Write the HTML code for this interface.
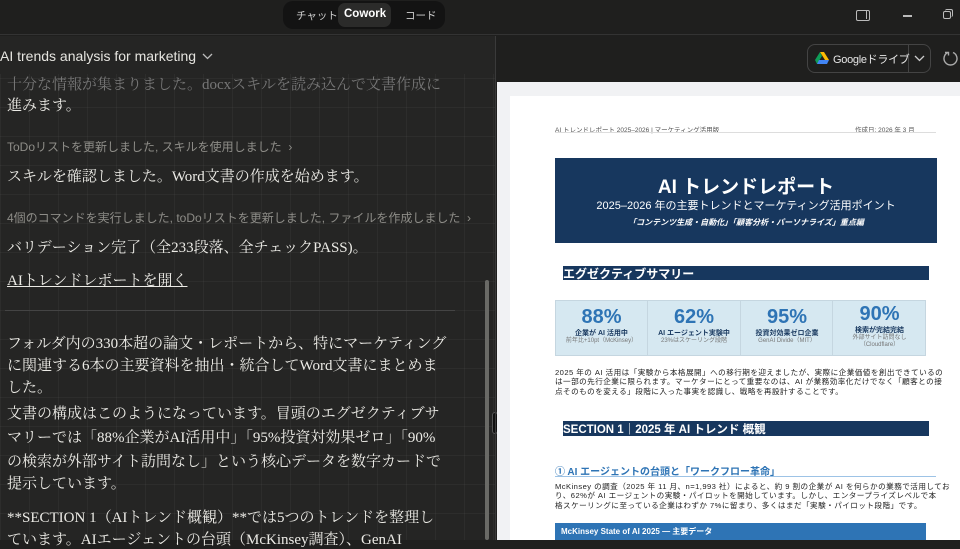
<!DOCTYPE html>
<html><head><meta charset="utf-8"><style>
*{margin:0;padding:0;box-sizing:border-box}
body{width:960px;height:540px;overflow:hidden;background:#1f1f1e;font-family:"Liberation Sans","Noto Sans CJK JP",sans-serif;position:relative}
.a{position:absolute;white-space:nowrap}
.left{position:absolute;left:0;top:36px;width:495px;height:504px;background-color:#252524;
background-image:linear-gradient(rgba(255,255,255,.035) 1px,transparent 1px),linear-gradient(90deg,rgba(255,255,255,.035) 1px,transparent 1px);background-size:29px 29px;background-position:0 13px}
.s{font-family:"Liberation Serif","Noto Serif CJK JP",serif;font-size:15px;color:#ecebe6}
.g{font-size:12px;color:#8e8d88}
.d{font-family:"Liberation Sans","Noto Sans CJK JP",sans-serif}
.p{font-size:7.6px;line-height:9.3px;color:#222;letter-spacing:0.45px}
</style></head><body>
<div class="a" style="left:0;top:0;width:960px;height:35px;background:#1f1f1e;border-bottom:1px solid #333"></div>
<div class="a" style="left:283px;top:1px;width:162px;height:28px;background:#131313;border-radius:10px"></div>
<div class="a" style="left:338px;top:3px;width:53px;height:24px;background:#2b2b2a;border-radius:7px"></div>
<div class="a" style="left:296px;top:8px;font-size:10.5px;color:#cfcfcf">チャット</div>
<div class="a" style="left:344px;top:8px;font-size:11.5px;color:#fff;font-weight:bold">Cowork</div>
<div class="a" style="left:405px;top:8px;font-size:10.5px;color:#cfcfcf">コード</div>
<div class="a" style="left:856px;top:10px;width:14px;height:11px;border:1.5px solid #bbb;border-radius:2px"><div style="position:absolute;right:2px;top:0;width:1.5px;height:8px;background:#bbb"></div></div>
<div class="a" style="left:903px;top:15px;width:9px;height:1.5px;background:#bbb"></div>
<div class="a" style="left:943px;top:11px;width:8px;height:8px;border:1.5px solid #bbb;border-radius:2px"></div>
<div class="a" style="left:945px;top:9px;width:8px;height:8px;border-top:1.5px solid #bbb;border-right:1.5px solid #bbb;border-radius:2px"></div>

<div class="left"></div>
<div class="a" style="left:0;top:36px;width:495px;height:38px;background:#252524"></div>
<div class="a" style="left:0;top:48px;font-size:14px;color:#e6e5e0">AI trends analysis for marketing</div>
<svg class="a" style="left:202px;top:53px" width="11" height="7" viewBox="0 0 11 7"><path d="M1 1l4.5 4.5L10 1" stroke="#bbb" stroke-width="1.3" fill="none"/></svg>
<div class="a s" style="left:7px;top:73px;color:#777">十分な情報が集まりました。docxスキルを読み込んで文書作成に</div>
<div class="a s" style="left:7px;top:94px">進みます。</div>
<div class="a g" style="left:7px;top:138px">ToDoリストを更新しました, スキルを使用しました&nbsp; ›</div>
<div class="a s" style="left:7px;top:165px">スキルを確認しました。Word文書の作成を始めます。</div>
<div class="a g" style="left:7px;top:209px">4個のコマンドを実行しました, toDoリストを更新しました, ファイルを作成しました&nbsp; ›</div>
<div class="a s" style="left:7px;top:236px">バリデーション完了（全233段落、全チェックPASS)。</div>
<div class="a s" style="left:7px;top:269px;text-decoration:underline">AIトレンドレポートを開く</div>
<div class="a" style="left:5px;top:310px;width:450px;height:1px;background:#444"></div>
<div class="a s" style="left:7px;top:332px">フォルダ内の330本超の論文・レポートから、特にマーケティング</div>
<div class="a s" style="left:7px;top:354px">に関連する6本の主要資料を抽出・統合してWord文書にまとめま</div>
<div class="a s" style="left:7px;top:376px">した。</div>
<div class="a s" style="left:7px;top:402px">文書の構成はこのようになっています。冒頭のエグゼクティブサ</div>
<div class="a s" style="left:7px;top:426px">マリーでは「88%企業がAI活用中」「95%投資対効果ゼロ」「90%</div>
<div class="a s" style="left:7px;top:450px">の検索が外部サイト訪問なし」という核心データを数字カードで</div>
<div class="a s" style="left:7px;top:472px">提示しています。</div>
<div class="a s" style="left:7px;top:506px">**SECTION 1（AIトレンド概観）**では5つのトレンドを整理し</div>
<div class="a s" style="left:7px;top:528px">ています。AIエージェントの台頭（McKinsey調査）、GenAI</div>
<div class="a" style="left:485px;top:280px;width:4px;height:260px;background:#6a6a66;border-radius:2px"></div>
<div class="a" style="left:492px;top:412px;width:6px;height:22px;background:#111;border:1px solid #555;border-radius:3px"></div>

<div class="a" style="left:495px;top:36px;width:1px;height:504px;background:#3a3a3a"></div>
<div class="a" style="left:807px;top:44px;width:124px;height:29px;border:1px solid #444;border-radius:8px"></div>
<div class="a" style="left:908px;top:44px;width:1px;height:29px;background:#444"></div>
<svg class="a" style="left:815px;top:52px" width="14" height="12" viewBox="0 0 14 12"><path d="M5 0h4l5 8H10z" fill="#fbbc04"/><path d="M5 0L0 8l2 4 5-8z" fill="#0f9d58"/><path d="M2 12h10l2-4H4z" fill="#4285f4"/></svg>
<div class="a" style="left:833px;top:51px;font-size:11px;color:#e6e6e6;letter-spacing:-0.3px">Googleドライブ</div>
<svg class="a" style="left:914px;top:55px" width="11" height="7" viewBox="0 0 11 7"><path d="M1 1l4.5 4.5L10 1" stroke="#ccc" stroke-width="1.3" fill="none"/></svg>
<svg class="a" style="left:942px;top:50px" width="17" height="17" viewBox="0 0 17 17"><path d="M6 2.5A6.5 6.5 0 1 0 11 2.5" stroke="#aaa" stroke-width="1.4" fill="none"/><path d="M3 2.5h3.5v3" stroke="#aaa" stroke-width="1.4" fill="none"/></svg>
<div class="a" style="left:497px;top:82px;width:463px;height:458px;background:#f1f2f4"></div>
<div class="a d" style="left:510px;top:96px;width:450px;height:444px;background:#fff"></div>

<div class="a d" style="left:555px;top:124px;font-size:6.5px;color:#555">AI トレンドレポート 2025–2026 | マーケティング活用版</div>
<div class="a d" style="left:855px;top:124px;font-size:6.5px;color:#555">作成日: 2026 年 3 月</div>
<div class="a" style="left:555px;top:132px;width:381px;height:1px;background:#ddd"></div>
<div class="a" style="left:555px;top:158px;width:382px;height:85px;background:#17375e"></div>
<div class="a d" style="left:555px;top:172px;width:382px;text-align:center;font-size:19px;font-weight:bold;color:#fff">AI トレンドレポート</div>
<div class="a d" style="left:555px;top:197px;width:382px;text-align:center;font-size:11px;color:#fff">2025–2026 年の主要トレンドとマーケティング活用ポイント</div>
<div class="a d" style="left:555px;top:217px;width:382px;text-align:center;font-size:8px;color:#fff;font-style:italic;font-weight:bold">「コンテンツ生成・自動化」「顧客分析・パーソナライズ」重点編</div>
<div class="a" style="left:563px;top:266px;width:366px;height:14px;background:#17375e"></div>
<div class="a d" style="left:563px;top:265px;font-size:12px;font-weight:bold;color:#fff">エグゼクティブサマリー</div>
<div class="a" style="left:555px;top:300px;width:371px;height:56px;background:#d6e8f1;border:1px solid #c5d6e0"></div>
<div class="a" style="left:647px;top:300px;width:1px;height:56px;background:#c5d6e0"></div>
<div class="a" style="left:740px;top:300px;width:1px;height:56px;background:#c5d6e0"></div>
<div class="a" style="left:832px;top:300px;width:1px;height:56px;background:#c5d6e0"></div>
<div class="a d" style="left:555px;top:307px;width:93px;text-align:center;line-height:1"><div style="font-size:20px;font-weight:bold;color:#2e74b5">88%</div><div style="font-size:7px;font-weight:bold;color:#17375e;margin-top:3px">企業が AI 活用中</div><div style="font-size:6px;color:#777;margin-top:1px">前年比+10pt（McKinsey）</div></div>
<div class="a d" style="left:648px;top:307px;width:92px;text-align:center;line-height:1"><div style="font-size:20px;font-weight:bold;color:#2e74b5">62%</div><div style="font-size:7px;font-weight:bold;color:#17375e;margin-top:3px">AI エージェント実験中</div><div style="font-size:6px;color:#777;margin-top:1px">23%はスケーリング段階</div></div>
<div class="a d" style="left:741px;top:307px;width:92px;text-align:center;line-height:1"><div style="font-size:20px;font-weight:bold;color:#2e74b5">95%</div><div style="font-size:7px;font-weight:bold;color:#17375e;margin-top:3px">投資対効果ゼロ企業</div><div style="font-size:6px;color:#777;margin-top:1px">GenAI Divide（MIT）</div></div>
<div class="a d" style="left:833px;top:304px;width:93px;text-align:center;line-height:1"><div style="font-size:20px;font-weight:bold;color:#2e74b5">90%</div><div style="font-size:7px;font-weight:bold;color:#17375e;margin-top:3px">検索が完結完結</div><div style="font-size:6px;color:#777;margin-top:1px">外部サイト訪問なし</div><div style="font-size:6px;color:#777;margin-top:1px">（Cloudflare）</div></div>
<div class="a d p" style="left:555px;top:368px">2025 年の AI 活用は「実験から本格展開」への移行期を迎えましたが、実際に企業価値を創出できているの<br>は一部の先行企業に限られます。マーケターにとって重要なのは、AI が業務効率化だけでなく「顧客との接<br>点そのものを変える」段階に入った事実を認識し、戦略を再設計することです。</div>
<div class="a" style="left:563px;top:421px;width:366px;height:15px;background:#17375e"></div>
<div class="a d" style="left:563px;top:421px;font-size:11.5px;font-weight:bold;color:#fff">SECTION 1｜2025 年 AI トレンド 概観</div>
<div class="a d" style="left:555px;top:463px;font-size:10px;font-weight:bold;color:#2e74b5">① AI エージェントの台頭と「ワークフロー革命」</div>
<div class="a" style="left:555px;top:476px;width:381px;height:1px;background:#9dc3e6"></div>
<div class="a d p" style="left:555px;top:482px">McKinsey の調査（2025 年 11 月、n=1,993 社）によると、約 9 割の企業が AI を何らかの業務で活用してお<br>り、62%が AI エージェントの実験・パイロットを開始しています。しかし、エンタープライズレベルで本<br>格スケーリングに至っている企業はわずか 7%に留まり、多くはまだ「実験・パイロット段階」です。</div>
<div class="a" style="left:555px;top:523px;width:371px;height:17px;background:#2e74b5"></div>
<div class="a d" style="left:561px;top:526px;font-size:8px;font-weight:bold;color:#fff">McKinsey State of AI 2025 ― 主要データ</div>
</body></html>
